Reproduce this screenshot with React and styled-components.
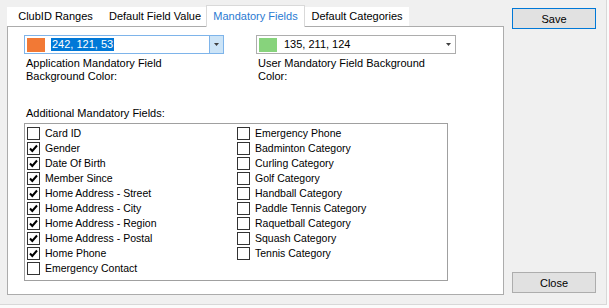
import React from 'react';
import styled, { createGlobalStyle } from 'styled-components';

const GlobalStyle = createGlobalStyle`
  html, body {
    margin: 0;
    padding: 0;
    background: #fbfbfb;
  }
  body {
    font-family: "Liberation Sans", Arial, sans-serif;
    font-size: 11px;
    color: #000;
  }
`;

const Window = styled.div`
  width: 606px;
  height: 304px;
  background: #f0f0f0;
  border-right: 1px solid #d8d8d8;
  border-bottom: 1px solid #d8d8d8;
  display: flex;
  align-items: flex-start;
`;

const TabControl = styled.div`
  width: 497px;
  margin: 5px 0 0 7px;
  display: flex;
  flex-direction: column;
`;

const TabStrip = styled.div`
  display: flex;
  align-items: flex-end;
  height: 21px;
`;

const Tab = styled.div`
  box-sizing: border-box;
  width: ${(p) => p.$w}px;
  text-align: center;
  white-space: nowrap;
  background: #fff;
  ${(p) =>
    p.$active
      ? `
    height: 22px;
    margin-bottom: -1px;
    border: 1px solid #d9d9d9;
    border-bottom: none;
    padding-top: 1px;
    line-height: 19px;
    color: #2a7ad2;
    position: relative;
    z-index: 1;
  `
      : `
    height: 19px;
    line-height: 19px;
    color: #000;
  `}
`;

const Panel = styled.div`
  box-sizing: border-box;
  height: 269px;
  background: #fff;
  border: 1px solid #acacac;
  padding: 8px 0 0 16px;
`;

const ColorRow = styled.div`
  display: flex;
  gap: 32px;
`;

const ColorGroup = styled.div`
  width: 200px;
`;

const Combo = styled.div`
  box-sizing: border-box;
  height: 19px;
  display: flex;
  align-items: center;
  border: 1px solid ${(p) => (p.$focused ? '#7eb4ea' : '#adadad')};
  background: #fff;
  padding-left: 2px;
`;

const Swatch = styled.div`
  width: 18px;
  height: 14px;
  background: ${(p) => p.$color};
  flex-shrink: 0;
`;

const ComboValue = styled.span`
  margin-left: 6px;
  padding: 0 1px;
  line-height: 13px;
  flex: 0 0 auto;
  ${(p) => (p.$selected ? 'background: #0078d7; color: #fff;' : '')}
`;

const DropButton = styled.div`
  margin-left: auto;
  width: 13px;
  height: 17px;
  display: flex;
  align-items: center;
  justify-content: center;
  ${(p) =>
    p.$focused ? 'background: #cce4f7; border-left: 1px solid #7eb4ea;' : ''}
`;

const FieldLabel = styled.div`
  margin-top: 3px;
  padding-left: 2px;
  line-height: 13px;
`;

const SectionLabel = styled.div`
  margin-top: 24px;
  padding-left: 2px;
  line-height: 13px;
`;

const CheckList = styled.div`
  box-sizing: border-box;
  margin-top: 3px;
  width: 424px;
  height: 158px;
  border: 1px solid #a0a0a0;
  background: #fff;
  padding: 2px 0 0 2px;
  display: grid;
  grid-template-rows: repeat(10, 15px);
  grid-template-columns: 210px 210px;
  grid-auto-flow: column;
  font-size: 10.5px;
`;

const CheckItem = styled.div`
  display: flex;
  align-items: center;
  height: 15px;
  line-height: 15px;
  white-space: nowrap;
`;

const Box = styled.div`
  box-sizing: border-box;
  width: 13px;
  height: 13px;
  border: 1px solid #333;
  background: #fff;
  margin-right: 5px;
  flex-shrink: 0;
  display: flex;
  align-items: center;
  justify-content: center;
`;

const ButtonColumn = styled.div`
  margin: 8px 0 0 8px;
  height: 285px;
  display: flex;
  flex-direction: column;
  justify-content: space-between;
`;

const Button = styled.button`
  box-sizing: border-box;
  width: 84px;
  height: 21px;
  padding: 0;
  font-family: "Liberation Sans", Arial, sans-serif;
  font-size: 11px;
  color: #000;
  background: #e1e1e1;
  border: 1px solid ${(p) => (p.$default ? '#0078d7' : '#adadad')};
  border-radius: 0;
`;

const Arrow = () => (
  <svg width="5" height="3" viewBox="0 0 5 3">
    <polygon points="0,0 5,0 2.5,3" fill="#404040" />
  </svg>
);

const Tick = () => (
  <svg width="11" height="11" viewBox="0 0 11 11">
    <polyline
      points="2,5.5 4.3,8 9,2.5"
      fill="none"
      stroke="#000"
      strokeWidth="2"
    />
  </svg>
);

const tabs = [
  { label: 'ClubID Ranges', w: 97 },
  { label: 'Default Field Value', w: 102 },
  { label: 'Mandatory Fields', w: 99, active: true },
  { label: 'Default Categories', w: 104 },
];

const fields = [
  ['Card ID', false],
  ['Gender', true],
  ['Date Of Birth', true],
  ['Member Since', true],
  ['Home Address - Street', true],
  ['Home Address - City', true],
  ['Home Address - Region', true],
  ['Home Address - Postal', true],
  ['Home Phone', true],
  ['Emergency Contact', false],
  ['Emergency Phone', false],
  ['Badminton Category', false],
  ['Curling Category', false],
  ['Golf Category', false],
  ['Handball Category', false],
  ['Paddle Tennis Category', false],
  ['Raquetball Category', false],
  ['Squash Category', false],
  ['Tennis Category', false],
];

function ColorCombo({ color, value, focused }) {
  return (
    <Combo $focused={focused}>
      <Swatch $color={color} />
      <ComboValue $selected={focused}>{value}</ComboValue>
      <DropButton $focused={focused}>
        <Arrow />
      </DropButton>
    </Combo>
  );
}

export default function App() {
  return (
    <>
      <GlobalStyle />
      <Window>
        <TabControl>
          <TabStrip>
            {tabs.map((t) => (
              <Tab key={t.label} $w={t.w} $active={t.active}>
                {t.label}
              </Tab>
            ))}
          </TabStrip>
          <Panel>
            <ColorRow>
              <ColorGroup>
                <ColorCombo color="rgb(242, 121, 53)" value="242, 121, 53" focused />
                <FieldLabel>
                  Application Mandatory Field
                  <br />
                  Background Color:
                </FieldLabel>
              </ColorGroup>
              <ColorGroup>
                <ColorCombo color="rgb(135, 211, 124)" value="135, 211, 124" />
                <FieldLabel>
                  User Mandatory Field Background
                  <br />
                  Color:
                </FieldLabel>
              </ColorGroup>
            </ColorRow>
            <SectionLabel>Additional Mandatory Fields:</SectionLabel>
            <CheckList>
              {fields.map(([name, checked]) => (
                <CheckItem key={name}>
                  <Box>{checked && <Tick />}</Box>
                  {name}
                </CheckItem>
              ))}
            </CheckList>
          </Panel>
        </TabControl>
        <ButtonColumn>
          <Button $default>Save</Button>
          <Button>Close</Button>
        </ButtonColumn>
      </Window>
    </>
  );
}
